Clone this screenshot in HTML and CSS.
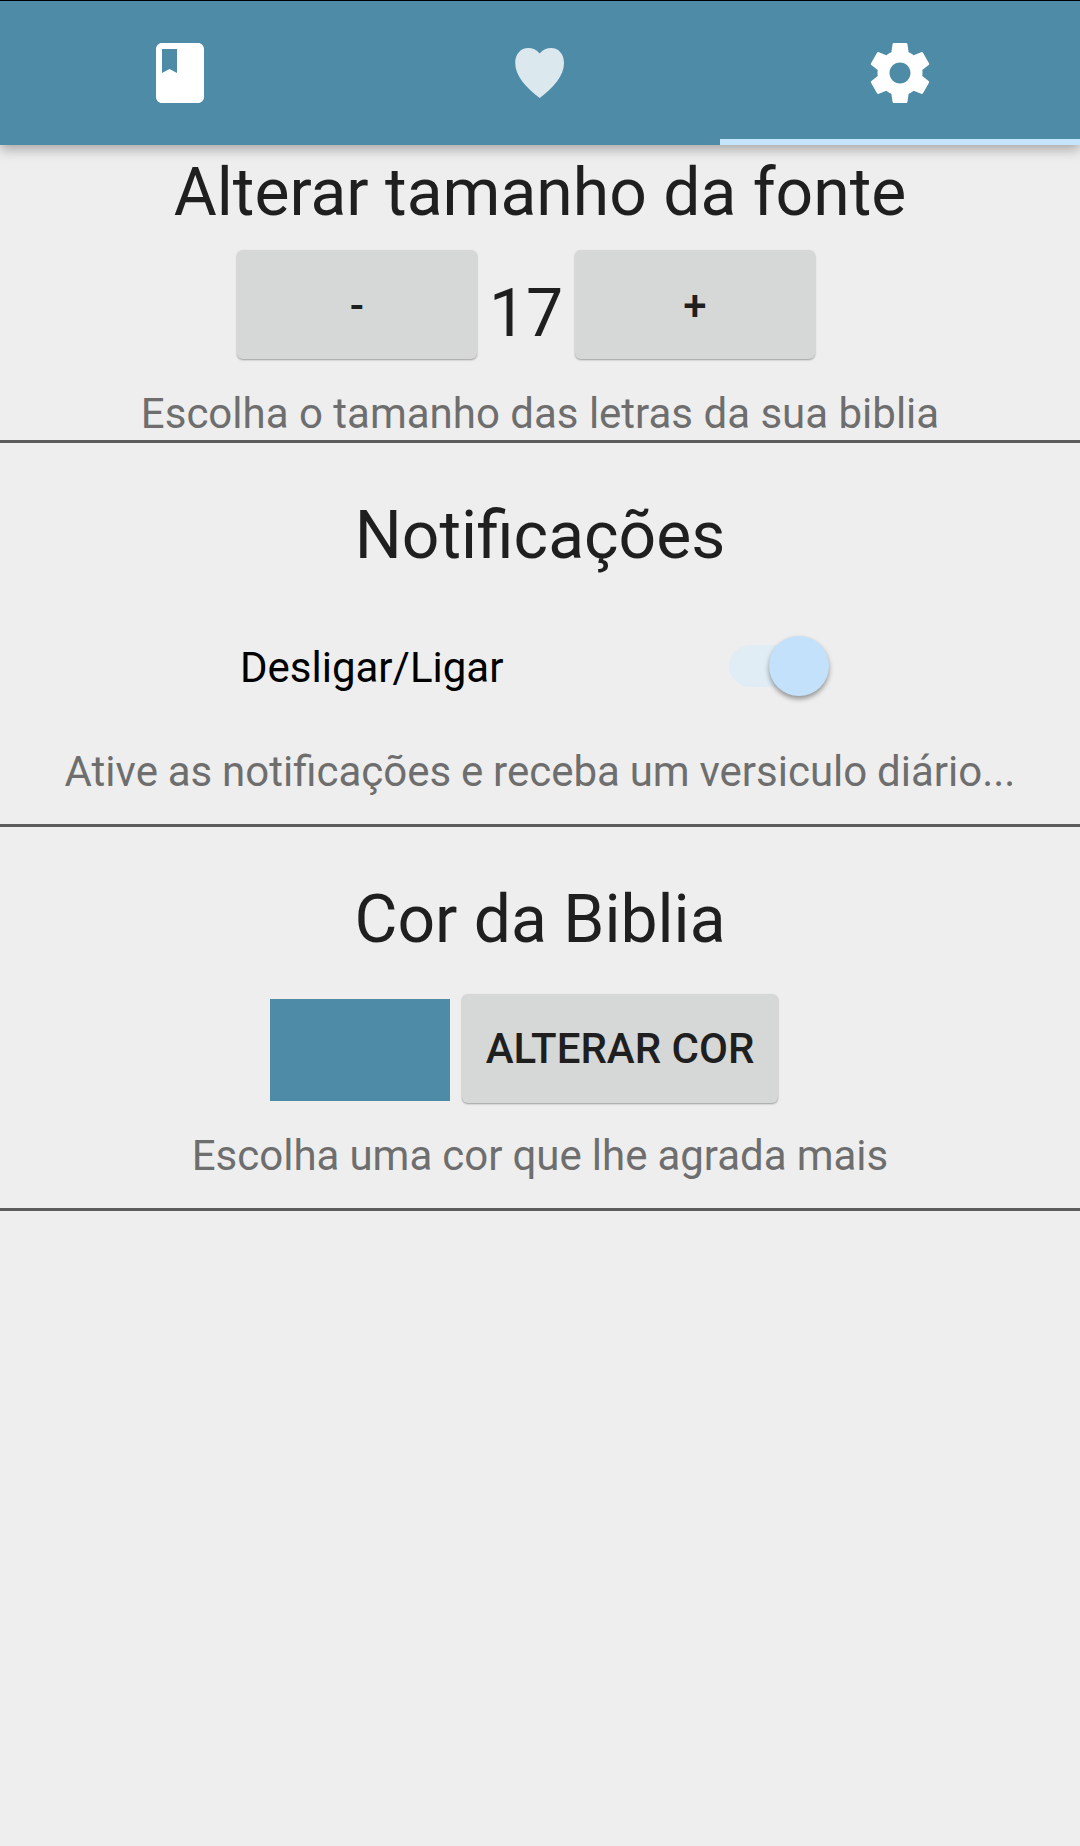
FILE: index.html
```
<!DOCTYPE html>
<html lang="pt-BR">
<head>
    <meta charset="UTF-8">
    <meta name="viewport" content="width=device-width, initial-scale=1.0">
    <title>Biblia - Ajustes</title>
    <link rel="stylesheet" href="styles.css">
</head>
<body>
    <header>
        <nav class="tabs">
            <a href="#" class="tab" aria-label="Biblia">
                <svg class="tab-icon" viewBox="0 0 24 24">
                    <path d="M18 2H6c-1.1 0-2 .9-2 2v16c0 1.1.9 2 2 2h12c1.1 0 2-.9 2-2V4c0-1.1-.9-2-2-2zM6 4h5v8l-2.5-1.35L6 12V4z"/>
                </svg>
            </a>
            <a href="#" class="tab" aria-label="Favoritos">
                <svg class="tab-icon heart" viewBox="0 0 72 72">
                    <path d="M35.7 16.6C32.5 12.8 28.6 11 24.2 11C16.8 11 11.2 17 11.2 26C11.2 38.5 21.5 50.5 35.7 61C49.9 50.5 60 38.5 60 26C60 17 54.6 11 47.2 11C42.8 11 38.9 12.8 35.7 16.6Z"/>
                </svg>
            </a>
            <a href="#" class="tab active" aria-label="Ajustes">
                <svg class="tab-icon" viewBox="0 0 24 24">
                    <path d="M19.43 12.98c.04-.32.07-.64.07-.98s-.03-.66-.07-.98l2.11-1.65c.19-.15.24-.42.12-.64l-2-3.46c-.12-.22-.39-.3-.61-.22l-2.49 1c-.52-.4-1.08-.73-1.69-.98l-.38-2.65C14.46 2.18 14.25 2 14 2h-4c-.25 0-.46.18-.49.42l-.38 2.65c-.61.25-1.17.59-1.69.98l-2.49-1c-.23-.09-.49 0-.61.22l-2 3.46c-.13.22-.07.49.12.64l2.11 1.65c-.04.32-.07.65-.07.98s.03.66.07.98l-2.11 1.65c-.19.15-.24.42-.12.64l2 3.46c.12.22.39.3.61.22l2.49-1c.52.4 1.08.73 1.69.98l.38 2.65c.03.24.24.42.49.42h4c.25 0 .46-.18.49-.42l.38-2.65c.61-.25 1.17-.59 1.69-.98l2.49 1c.23.09.49 0 .61-.22l2-3.46c.12-.22.07-.49-.12-.64l-2.11-1.65zM12 15.5c-1.93 0-3.5-1.57-3.5-3.5s1.57-3.5 3.5-3.5 3.5 1.57 3.5 3.5-1.57 3.5-3.5 3.5z"/>
                </svg>
            </a>
        </nav>
    </header>

    <main>
        <section class="setting font-setting">
            <h2>Alterar tamanho da fonte</h2>
            <div class="font-size">
                <button class="btn" id="font-minus">-</button>
                <span class="font-value" id="font-value">17</span>
                <button class="btn" id="font-plus">+</button>
            </div>
            <p>Escolha o tamanho das letras da sua biblia</p>
        </section>

        <section class="setting">
            <h2>Notificações</h2>
            <label class="switch-row">
                <span class="switch-label">Desligar/Ligar</span>
                <span class="switch"><span class="thumb"></span></span>
            </label>
            <p>Ative as notificações e receba um versiculo diário...</p>
        </section>

        <section class="setting">
            <h2>Cor da Biblia</h2>
            <div class="color-row">
                <span class="swatch"></span>
                <button class="btn btn-color">ALTERAR COR</button>
            </div>
            <p>Escolha uma cor que lhe agrada mais</p>
        </section>
    </main>
</body>
</html>
```
FILE: styles.css
```
* {
    box-sizing: border-box;
}

body {
    font-family: Roboto, sans-serif;
    font-size: 42px;
    line-height: 49px;
    background-color: #eee;
    color: #1f1f1f;
    margin: 0;
    min-height: 1846px;
}

header {
    border-top: 1px solid #000;
    background-color: #4d8ba6;
    box-shadow: 0 4px 12px rgba(0, 0, 0, 0.32);
}

.tabs {
    display: flex;
    height: 144px;
}

.tab {
    flex: 1;
    display: flex;
    align-items: center;
    justify-content: center;
    border-top: 6px solid transparent;
    border-bottom: 6px solid transparent;
}

.tab.active {
    border-bottom-color: #c6e5fd;
}

.tab-icon {
    width: 72px;
    height: 72px;
    fill: white;
}

.tab-icon.heart {
    fill: #dbe8ee;
}

.setting {
    display: flex;
    flex-direction: column;
    align-items: center;
    height: 384px;
    padding-top: 54px;
    border-bottom: 3px solid #5c5c5c;
}

.font-setting {
    height: 298px;
    padding-top: 9px;
}

h2 {
    font-size: 66px;
    font-weight: 400;
    line-height: 77px;
    margin: 0;
}

p {
    margin: 0;
    color: #6e6e6e;
}

.btn {
    width: 240px;
    height: 109px;
    padding: 2px 0 0;
    border: none;
    border-radius: 6px;
    background-color: #d6d8d7;
    box-shadow: 0 1px 2px rgba(0, 0, 0, 0.35);
    color: #1f1f1f;
    font-family: inherit;
    font-size: 42px;
    font-weight: 500;
}

.font-size {
    display: flex;
    width: 606px;
    height: 110px;
    margin-top: 19px;
}

.font-value {
    width: 98px;
    padding-top: 25px;
    font-size: 66px;
    line-height: 77px;
    text-align: center;
}

.font-setting p {
    margin-top: 29px;
}

.switch-row {
    display: flex;
    align-items: center;
    justify-content: space-between;
    width: 600px;
    height: 60px;
    margin-top: 62px;
    color: #000;
}

.switch-label {
    padding-top: 2px;
}

.switch {
    display: flex;
    align-items: center;
    justify-content: flex-end;
    width: 111px;
    height: 42px;
    padding-right: 11px;
    border-radius: 21px;
    background: linear-gradient(to right, #e0edf5 80px, transparent 80px);
}

.thumb {
    width: 60px;
    height: 60px;
    border-radius: 50%;
    background-color: #c3e1fa;
    box-shadow: 0 3px 5px rgba(0, 0, 0, 0.38);
}

.switch-row + p {
    margin-top: 51px;
    word-spacing: -0.6px;
}

.color-row {
    display: flex;
    align-items: center;
    width: 540px;
    height: 110px;
    margin-top: 35px;
}

.swatch {
    width: 180px;
    height: 102px;
    margin: 4px 12px 0 0;
    background-color: #4d8ba6;
}

.btn-color {
    width: 316px;
    padding-top: 0;
}

.color-row + p {
    margin-top: 28px;
    word-spacing: -0.4px;
}
```
